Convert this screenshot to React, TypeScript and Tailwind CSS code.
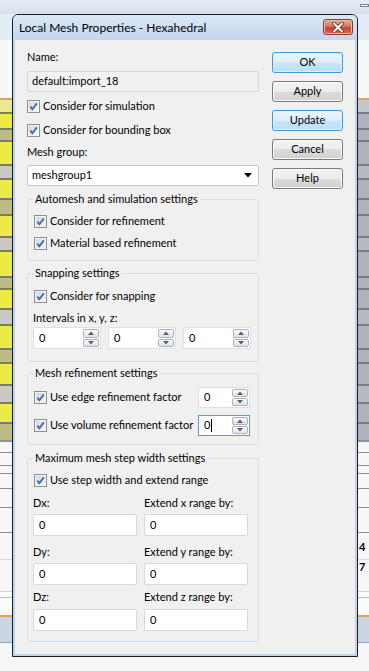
import React from "react";

type Stripe = { h: string; l: string; r: string; text?: string };

const stripes: Stripe[] = [
  { h: "h-[26px]", l: "bg-[#e4ecf5]", r: "bg-[#e4ecf5]" },
  { h: "h-[58px]", l: "bg-[#f6f8fb]", r: "bg-[#f6f8fb]" },
  { h: "h-[2px]", l: "bg-[#e2a15a]", r: "bg-[#e2a15a]" },
  { h: "h-[12px]", l: "bg-[#e9e98f]", r: "bg-[#c3c7cd]" },
  { h: "h-[2px]", l: "bg-[#7c7c60]", r: "bg-[#787d85]" },
  { h: "h-[14px]", l: "bg-[#ecea45]", r: "bg-[#aeb3bb]" },
  { h: "h-[2px]", l: "bg-[#7c7c60]", r: "bg-[#787d85]" },
  { h: "h-[10px]", l: "bg-[#bdbb86]", r: "bg-[#aeb3bb]" },
  { h: "h-[2px]", l: "bg-[#7c7c60]", r: "bg-[#787d85]" },
  { h: "h-[22px]", l: "bg-[#ecea45]", r: "bg-[#aeb3bb]" },
  { h: "h-[2px]", l: "bg-[#7c7c60]", r: "bg-[#787d85]" },
  { h: "h-[12px]", l: "bg-[#c9cac4]", r: "bg-[#b6bac1]" },
  { h: "h-[2px]", l: "bg-[#7c7c60]", r: "bg-[#787d85]" },
  { h: "h-[18px]", l: "bg-[#ecea45]", r: "bg-[#aeb3bb]" },
  { h: "h-[2px]", l: "bg-[#7c7c60]", r: "bg-[#787d85]" },
  { h: "h-[14px]", l: "bg-[#bdbb86]", r: "bg-[#aeb3bb]" },
  { h: "h-[2px]", l: "bg-[#7c7c60]", r: "bg-[#787d85]" },
  { h: "h-[20px]", l: "bg-[#ecea45]", r: "bg-[#aeb3bb]" },
  { h: "h-[2px]", l: "bg-[#7c7c60]", r: "bg-[#787d85]" },
  { h: "h-[12px]", l: "bg-[#c9cac4]", r: "bg-[#b6bac1]" },
  { h: "h-[2px]", l: "bg-[#7c7c60]", r: "bg-[#787d85]" },
  { h: "h-[24px]", l: "bg-[#ecea45]", r: "bg-[#aeb3bb]" },
  { h: "h-[2px]", l: "bg-[#7c7c60]", r: "bg-[#787d85]" },
  { h: "h-[10px]", l: "bg-[#bdbb86]", r: "bg-[#aeb3bb]" },
  { h: "h-[2px]", l: "bg-[#7c7c60]", r: "bg-[#787d85]" },
  { h: "h-[18px]", l: "bg-[#ecea45]", r: "bg-[#aeb3bb]" },
  { h: "h-[2px]", l: "bg-[#7c7c60]", r: "bg-[#787d85]" },
  { h: "h-[14px]", l: "bg-[#c9cac4]", r: "bg-[#b6bac1]" },
  { h: "h-[2px]", l: "bg-[#7c7c60]", r: "bg-[#787d85]" },
  { h: "h-[22px]", l: "bg-[#ecea45]", r: "bg-[#aeb3bb]" },
  { h: "h-[2px]", l: "bg-[#7c7c60]", r: "bg-[#787d85]" },
  { h: "h-[12px]", l: "bg-[#bdbb86]", r: "bg-[#aeb3bb]" },
  { h: "h-[2px]", l: "bg-[#7c7c60]", r: "bg-[#787d85]" },
  { h: "h-[20px]", l: "bg-[#ecea45]", r: "bg-[#aeb3bb]" },
  { h: "h-[2px]", l: "bg-[#7c7c60]", r: "bg-[#787d85]" },
  { h: "h-[16px]", l: "bg-[#c9cac4]", r: "bg-[#b6bac1]" },
  { h: "h-[2px]", l: "bg-[#7c7c60]", r: "bg-[#787d85]" },
  { h: "h-[18px]", l: "bg-[#ecea45]", r: "bg-[#aeb3bb]" },
  { h: "h-[2px]", l: "bg-[#7c7c60]", r: "bg-[#787d85]" },
  { h: "h-[16px]", l: "bg-[#bdbb86]", r: "bg-[#aeb3bb]" },
  { h: "h-[2px]", l: "bg-[#8f8f8f]", r: "bg-[#8f8f8f]" },
  { h: "h-[10px]", l: "bg-[#f7f7f7]", r: "bg-[#f7f7f7]" },
  { h: "h-[1px]", l: "bg-[#8f8f8f]", r: "bg-[#8f8f8f]" },
  { h: "h-[12px]", l: "bg-[#f7f7f7]", r: "bg-[#f7f7f7]" },
  { h: "h-[1px]", l: "bg-[#8f8f8f]", r: "bg-[#8f8f8f]" },
  { h: "h-[7px]", l: "bg-[#f7f7f7]", r: "bg-[#f7f7f7]" },
  { h: "h-[1px]", l: "bg-[#8f8f8f]", r: "bg-[#8f8f8f]" },
  { h: "h-[14px]", l: "bg-[#f7f7f7]", r: "bg-[#f7f7f7]" },
  { h: "h-[1px]", l: "bg-[#8f8f8f]", r: "bg-[#8f8f8f]" },
  { h: "h-[18px]", l: "bg-[#f7f7f7]", r: "bg-[#f7f7f7]" },
  { h: "h-[1px]", l: "bg-[#8f8f8f]", r: "bg-[#8f8f8f]" },
  { h: "h-[24px]", l: "bg-[#f7f7f7]", r: "bg-[#f7f7f7]" },
  { h: "h-[1px]", l: "bg-[#8f8f8f]", r: "bg-[#8f8f8f]" },
  { h: "h-[26px]", l: "bg-[#f7f7f7]", r: "bg-[#f7f7f7]", text: "4" },
  { h: "h-[1px]", l: "bg-[#d8d8d8]", r: "bg-[#d8d8d8]" },
  { h: "h-[12px]", l: "bg-[#f7f7f7]", r: "bg-[#f7f7f7]", text: "7" },
  { h: "h-[19px]", l: "bg-[#f7f7f7]", r: "bg-[#f7f7f7]" },
  { h: "h-[1px]", l: "bg-[#cfcfcf]", r: "bg-[#cfcfcf]" },
  { h: "h-[5px]", l: "bg-[#fbfbfb]", r: "bg-[#fbfbfb]" },
  { h: "h-[1px]", l: "bg-[#a9c2dd]", r: "bg-[#a9c2dd]" },
  { h: "h-[17px]", l: "bg-[#fbfbfb]", r: "bg-[#fbfbfb]" },
  { h: "h-[2px]", l: "bg-[#dca060]", r: "bg-[#dca060]" },
  { h: "h-[25px]", l: "bg-[#c9d5e3]", r: "bg-[#c9d5e3]" },
  { h: "h-[1px]", l: "bg-[#9aa4af]", r: "bg-[#9aa4af]" },
  { h: "h-[28px]", l: "bg-[#f5f6f8]", r: "bg-[#f5f6f8]" },
];

function Backdrop() {
  return (
    <div className="flex flex-col">
      <div className="h-[14px] flex items-start bg-[linear-gradient(#e6edf5,#d6e0eb)]">
        <span className="ml-auto mt-[4px] w-[9px] h-[3px] border border-[#7d8894] bg-white" />
      </div>
      {stripes.map((s, i) => (
        <div key={i} className={`${s.h} flex`}>
          <div className={`w-[12px] ${s.l}`} />
          <div className={`flex-1 ${s.r} flex items-center pl-[347px] text-[11px] font-bold leading-none`}>
            {s.text}
          </div>
        </div>
      ))}
    </div>
  );
}

function CloseButton() {
  return (
    <div className="ml-auto mt-[4px] w-[30px] h-[16px] rounded-[3px] border border-[#8b3a2e] bg-[linear-gradient(#e9a897,#d4715c_50%,#c2452d_50%,#d06a4e)] shadow-[inset_0_0_0_1px_#f0b7a8] flex items-center justify-center">
      <svg width="14" height="11" viewBox="0 0 14 11">
        <path d="M3 1.5 L11 9.5 M11 1.5 L3 9.5" stroke="#6b2a22" strokeWidth="3.6" strokeLinecap="round" />
        <path d="M3 1.5 L11 9.5 M11 1.5 L3 9.5" stroke="#ffffff" strokeWidth="2" strokeLinecap="round" />
      </svg>
    </div>
  );
}

function CheckBox() {
  return (
    <span className="w-[13px] h-[13px] shrink-0 border border-[#8e8f8f] bg-[linear-gradient(135deg,#cfd6df,#f7f8fa)] shadow-[inset_0_0_0_1px_#f4f4f4] flex items-center justify-center">
      <svg width="11" height="11" viewBox="0 0 11 11">
        <path d="M2.3 5.6 L4.4 8.2 L8.8 2.4" fill="none" stroke="#4a69ad" strokeWidth="1.9" />
      </svg>
    </span>
  );
}

function Check({ label, className = "" }: { label: string; className?: string }) {
  return (
    <div className={`h-[20px] flex items-center gap-[3px] whitespace-nowrap ${className}`}>
      <CheckBox />
      <span>{label}</span>
    </div>
  );
}

function Label({ text, className = "" }: { text: string; className?: string }) {
  return <div className={`h-[16px] leading-[16px] whitespace-nowrap ${className}`}>{text}</div>;
}

function Arrow({ up }: { up?: boolean }) {
  return (
    <svg width="6" height="4" viewBox="0 0 6 4">
      <path d={up ? "M0 4 L3 0.5 L6 4 Z" : "M0 0 L3 3.5 L6 0 Z"} fill="#4c607f" />
    </svg>
  );
}

function SpinButton({ up }: { up?: boolean }) {
  return (
    <div className="flex-1 rounded-[2px] border border-[#aeb2b8] bg-[linear-gradient(#fafafa,#e2e3e5)] flex items-center justify-center">
      <Arrow up={up} />
    </div>
  );
}

function Spin({
  w,
  focused,
  className = "",
}: {
  w: string;
  focused?: boolean;
  className?: string;
}) {
  return (
    <div
      className={`${w} ${className} shrink-0 flex bg-white border ${
        focused ? "border-[#5b9bd5]" : "border-[#dfe0e4]"
      }`}
    >
      <div className="flex-1 flex items-center pl-[5px]">
        0{focused && <span className="ml-[1px] w-px h-[13px] bg-black" />}
      </div>
      <div className="w-[17px] flex flex-col gap-px py-px pr-px">
        <SpinButton up />
        <SpinButton />
      </div>
    </div>
  );
}

function Field({ className = "" }: { className?: string }) {
  return (
    <div className={`h-[22px] bg-white border border-[#d8d9dd] rounded-[2px] flex items-center pl-[5px] ${className}`}>
      0
    </div>
  );
}

function Group({
  title,
  className = "",
  children,
}: {
  title: string;
  className?: string;
  children: React.ReactNode;
}) {
  return (
    <fieldset className={`border border-[#d5dfe5] rounded-[3px] px-[5px] ${className}`}>
      <legend className="px-[2px] leading-[16px] whitespace-nowrap">{title}</legend>
      {children}
    </fieldset>
  );
}

function Btn({ label, primary }: { label: string; primary?: boolean }) {
  return (
    <div
      className={`h-[21px] w-[71px] rounded-[3px] border flex items-center justify-center ${
        primary
          ? "border-[#3c9bd6] bg-[linear-gradient(#eaf5fc,#dcedf9_50%,#c8e5f7_50%,#bcdff4)] shadow-[inset_0_0_0_1px_#dff1fc]"
          : "border-[#7a7a7a] bg-[linear-gradient(#f3f3f3,#ebebeb_50%,#dddddd_50%,#d0d0d0)] shadow-[inset_0_0_0_1px_#fbfbfb]"
      }`}
    >
      {label}
    </div>
  );
}

function LeftColumn() {
  return (
    <div className="w-[232px] flex flex-col">
      <Label text="Name:" className="mt-[9px]" />
      <div className="mt-[6px] h-[21px] bg-[#f1f1f1] border border-[#d5d5d5] rounded-[2px] flex items-center pl-[4px]">
        default:import_18
      </div>
      <Check label="Consider for simulation" className="mt-[4px]" />
      <Check label="Consider for bounding box" className="mt-[4px]" />
      <Label text="Mesh group:" className="mt-[4px]" />
      <div className="mt-[5px] h-[21px] bg-white border border-[#c3c5cb] rounded-[2px] flex items-center pl-[4px] pr-[6px]">
        <span className="flex-1">meshgroup1</span>
        <svg width="8" height="5" viewBox="0 0 8 5">
          <path d="M0 0 L8 0 L4 4.5 Z" fill="#000" />
        </svg>
      </div>

      <Group title="Automesh and simulation settings" className="mt-[5px] pb-[7px]">
        <Check label="Consider for refinement" className="mt-[4px] ml-px" />
        <Check label="Material based refinement" className="mt-[2px] ml-px" />
      </Group>

      <Group title="Snapping settings" className="mt-[4px] pb-[12px]">
        <Check label="Consider for snapping" className="mt-[5px] ml-px" />
        <Label text="Intervals in x, y, z:" className="mt-[4px]" />
        <div className="mt-[1px] h-[22px] flex gap-[7px]">
          <Spin w="w-[68px]" />
          <Spin w="w-[68px]" />
          <Spin w="w-[68px]" />
        </div>
      </Group>

      <Group title="Mesh refinement settings" className="mt-[3px] pb-[8px]">
        <div className="mt-[6px] h-[21px] flex items-center">
          <Check label="Use edge refinement factor" className="flex-1 ml-px" />
          <Spin w="w-[52px]" className="h-[21px] mr-[3px]" />
        </div>
        <div className="mt-[7px] h-[21px] flex items-center">
          <Check label="Use volume refinement factor" className="flex-1 ml-px" />
          <Spin w="w-[52px]" focused className="h-[21px] mr-[3px]" />
        </div>
      </Group>

      <Group title="Maximum mesh step width settings" className="mt-[5px] pb-[10px]">
        <Check label="Use step width and extend range" className="mt-[4px] ml-px" />
        <div className="grid grid-cols-[104px_104px] gap-x-[7px]">
          <Label text="Dx:" className="mt-[5px]" />
          <Label text="Extend x range by:" className="mt-[5px]" />
          <Field className="mt-[3px]" />
          <Field className="mt-[3px]" />
          <Label text="Dy:" className="mt-[8px]" />
          <Label text="Extend y range by:" className="mt-[8px]" />
          <Field className="mt-[3px]" />
          <Field className="mt-[3px]" />
          <Label text="Dz:" className="mt-[4px]" />
          <Label text="Extend z range by:" className="mt-[4px]" />
          <Field className="mt-[4px]" />
          <Field className="mt-[4px]" />
        </div>
      </Group>
    </div>
  );
}

function Dialog() {
  return (
    <div className="absolute left-[12px] top-[14px] w-[346px] h-[643px] flex flex-col border border-[#1c1f24] rounded-t-[6px] bg-[#bfd3ea]">
      <div className="h-[25px] shrink-0 flex items-start rounded-t-[5px] bg-[linear-gradient(#dbe7f5,#c2d6ed)] pl-[6px] pr-[4px]">
        <span className="mt-[5px] text-[12px] leading-[16px]">Local Mesh Properties - Hexahedral</span>
        <CloseButton />
      </div>
      <div className="flex-1 mx-[2px] mb-[2px] bg-[#f0f0f0] flex pl-[12px]">
        <LeftColumn />
        <div className="ml-[13px] pt-[12px] flex flex-col gap-[8px]">
          <Btn label="OK" primary />
          <Btn label="Apply" />
          <Btn label="Update" primary />
          <Btn label="Cancel" />
          <Btn label="Help" />
        </div>
      </div>
    </div>
  );
}

export default function App() {
  return (
    <div className="relative w-[369px] h-[671px] overflow-hidden font-['Lato',sans-serif] text-[11px] text-black">
      <Backdrop />
      <Dialog />
    </div>
  );
}
